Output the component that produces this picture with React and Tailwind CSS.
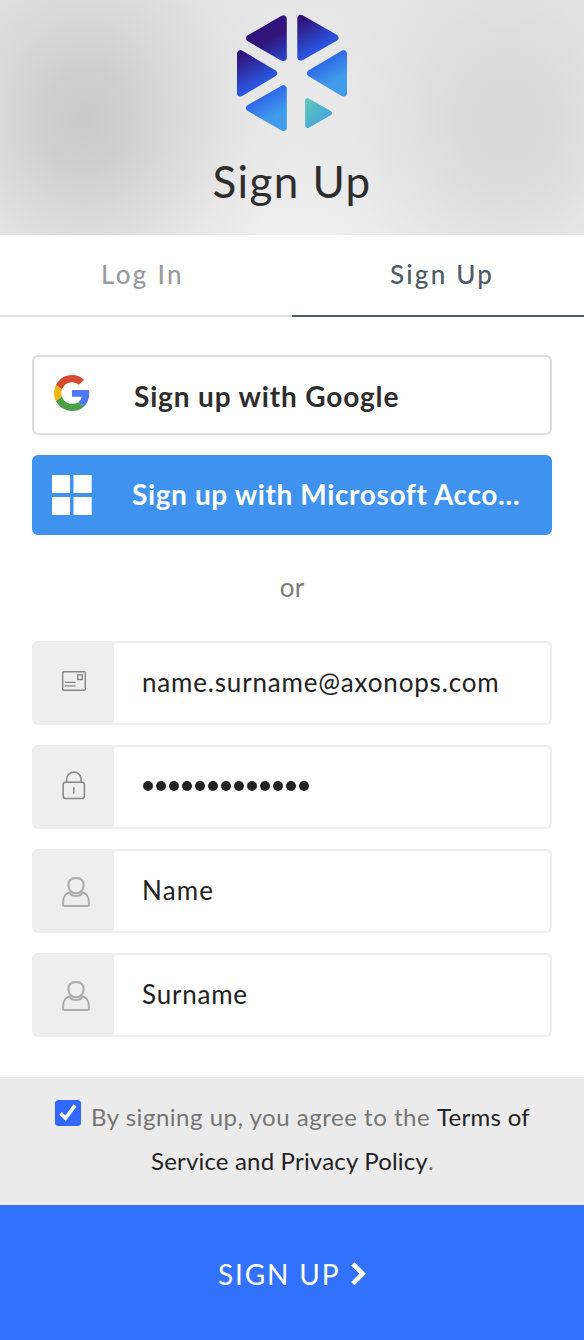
function Logo() {
  return (
    <svg width="116" height="122" viewBox="234 12 116 122" className="block">
      <defs>
        <linearGradient id="brand" gradientUnits="userSpaceOnUse" x1="240" y1="52" x2="278" y2="117">
          <stop offset="0.05" stopColor="#30147b" />
          <stop offset="0.45" stopColor="#2a50d8" />
          <stop offset="0.65" stopColor="#2f66e8" />
          <stop offset="0.96" stopColor="#409bea" />
        </linearGradient>
        <linearGradient id="teal" gradientUnits="userSpaceOnUse" x1="305" y1="100" x2="326" y2="122">
          <stop offset="0" stopColor="#63c8b9" />
          <stop offset="1" stopColor="#43a5df" />
        </linearGradient>
      </defs>
      <g fill="url(#brand)" stroke="url(#brand)" strokeWidth="7" strokeLinejoin="round">
        <path d="M249.5 38.3 283.3 18.9V57.6Z" />
        <path d="M300.8 18.4V57.1L335 37.8Z" />
        <path d="M240.5 53.7V93L273.6 73.3Z" />
        <path d="M343.5 53.7V93L310.5 73.3Z" />
        <path d="M249.5 108 283.3 88.7V127.5Z" />
      </g>
      <path d="M307.6 100.6V125.6L329.4 113.2Z" fill="url(#teal)" stroke="url(#teal)" strokeWidth="5" strokeLinejoin="round" />
    </svg>
  )
}

function GoogleIcon() {
  return (
    <svg width="36" height="36" viewBox="0 0 48 48" className="block shrink-0">
      <path fill="#d64a32" d="M24 9.5c3.54 0 6.71 1.22 9.21 3.6l6.85-6.85C35.9 2.38 30.47 0 24 0 14.62 0 6.51 5.38 2.56 13.22l7.98 6.19C12.43 13.72 17.74 9.5 24 9.5z" />
      <path fill="#4e78f6" d="M46.98 24.55c0-1.57-.15-3.09-.38-4.55H24v9.02h12.94c-.58 2.96-2.26 5.48-4.78 7.18l7.73 6c4.51-4.18 7.09-10.36 7.09-17.65z" />
      <path fill="#f3b60e" d="M10.53 28.59c-.48-1.45-.76-2.99-.76-4.59s.27-3.14.76-4.59l-7.98-6.19C.92 16.46 0 20.12 0 24c0 3.88.92 7.54 2.56 10.78l7.97-6.19z" />
      <path fill="#4a9f47" d="M24 48c6.48 0 11.93-2.13 15.89-5.81l-7.73-6c-2.15 1.45-4.92 2.3-8.16 2.3-6.26 0-11.57-4.22-13.47-9.91l-7.98 6.19C6.51 42.62 14.62 48 24 48z" />
    </svg>
  )
}

function MicrosoftIcon() {
  return (
    <svg width="40" height="40" viewBox="0 0 40 40" className="block shrink-0" fill="#fff">
      <path d="M0 0h18v18H0zM21.5 0H39.700v18H21.500zM0 22h18v18H0zM21.500 22H39.700v18H21.500z" />
    </svg>
  )
}

function MailIcon() {
  return (
    <svg width="24" height="20" viewBox="0 0 24 20" className="block" fill="none" stroke="#868686" strokeWidth="1.4">
      <rect x="0.7" y="0.7" width="22.6" height="18.6" rx="1" />
      <rect x="15.7" y="3.9" width="4.6" height="4.6" />
      <path d="M3 11.4h10.6M3 14.9h10.6" />
    </svg>
  )
}

function LockIcon() {
  return (
    <svg width="24" height="29" viewBox="0 0 24 29" className="block" fill="none" stroke="#868686" strokeWidth="1.5">
      <rect x="1.200" y="11.200" width="21.200" height="16.200" rx="2.5" />
      <path d="M4.7 11.2V8.2a7.2 7.2 0 0 1 14.4 0v3M11.8 16.300v6.400" />
    </svg>
  )
}

function UserIcon() {
  return (
    <svg width="28" height="30" viewBox="0 0 28 30" className="block" fill="none" stroke="#ababab" strokeWidth="2">
      <path d="M14 1C9 1 6.400 3.400 6.400 8.200S9.600 16.200 14 16.200S21.600 13 21.600 8.200 19 1 14 1Z" />
      <path d="M7.5 15.3C3.2 16.2 1 20.5 1 27.5Q1 29 2.5 29H25.5Q27 29 27 27.5C27 20.5 24.8 16.2 20.5 15.3C18.8 20.2 9.2 20.2 7.5 15.3Z" />
    </svg>
  )
}

function Field({ icon, children }) {
  return (
    <div className="flex h-[84px] overflow-hidden rounded-md border-2 border-[#eeeeee] bg-white">
      <div className="w-20 shrink-0 bg-[#eeeeee] pl-7">{icon}</div>
      <div className="flex flex-1 items-center pb-0.5 text-[26px] whitespace-nowrap text-[#222222]">{children}</div>
    </div>
  )
}

export default function App() {
  return (
    <main className="flex h-[1340px] w-[584px] flex-col bg-white font-['Lato',sans-serif]">
      <header className="flex h-[235px] flex-col items-center bg-[radial-gradient(ellipse_200px_240px_at_85px_118px,#cacaca_0%,rgba(204,204,204,0.9)_20%,rgba(208,208,208,0.62)_45%,rgba(216,216,216,0.25)_75%,rgba(231,231,231,0)_100%),radial-gradient(ellipse_200px_240px_at_508px_122px,#d8d8d8_0%,rgba(217,217,217,0.85)_25%,rgba(220,220,220,0.5)_55%,rgba(226,226,226,0.18)_80%,rgba(231,231,231,0)_100%),linear-gradient(#e6e6e6,#e9e9e9_60%,#eeeeee)] pt-3">
        <Logo />
        <h1 className="mt-[17px] text-[44px] leading-[60px] tracking-[1.4px] text-[#2d2d2d]">Sign Up</h1>
      </header>

      <nav className="grid h-[82px] grid-cols-2 text-[26px] leading-[78px] font-medium">
        <a className="border-b-2 border-[#dddddd] pl-[101px] tracking-[2.3px] text-[#989ba2]">Log In</a>
        <a className="border-b-2 border-[#4f5b66] pl-[98px] tracking-[2.25px] text-[#4f5b66]">Sign Up</a>
      </nav>

      <section className="flex flex-col gap-5 px-8 pt-[38px]">
        <button className="flex h-20 rounded-md border-2 border-[#dbdbe0] pt-[18px] pl-5 text-left text-[28px] font-bold text-[#2d2d2d]">
          <GoogleIcon />
          <span className="ml-11 leading-[42px] tracking-[0.84px]">Sign up with Google</span>
        </button>
        <button className="flex h-20 rounded-md bg-[#3f93ef] pt-5 pl-5 text-left text-[28px] font-bold text-white">
          <MicrosoftIcon />
          <span className="ml-10 leading-[38px] tracking-[0.62px] whitespace-nowrap">Sign up with Microsoft Acco…</span>
        </button>
      </section>

      <p className="flex h-[106px] items-center justify-center pb-0.5 text-[26px] tracking-[0.2px] text-[#7b7b7b]">or</p>

      <section className="flex flex-col gap-5 px-8">
        <Field icon={<div className="pt-7"><MailIcon /></div>}>
          <span className="pl-7 tracking-[0.82px]">name.surname@axonops.com</span>
        </Field>
        <Field icon={<div className="pt-6"><LockIcon /></div>}>
          <div className="flex gap-[3px] pl-[29px]">
            {Array.from({ length: 13 }, (_, i) => (
              <span key={i} className="size-2.5 rounded-full bg-[#222222]" />
            ))}
          </div>
        </Field>
        <Field icon={<div className="pt-[26px]"><UserIcon /></div>}>
          <span className="pl-7 tracking-[1.2px]">Name</span>
        </Field>
        <Field icon={<div className="pt-[26px]"><UserIcon /></div>}>
          <span className="pl-7 tracking-[0.78px]">Surname</span>
        </Field>
      </section>

      <section className="mt-10 h-32 bg-[#ebebeb] pt-[18px] text-[24px] leading-[44px] whitespace-nowrap text-[#757575]">
        <div className="flex pl-[55px]">
          <svg width="26" height="26" viewBox="0 0 26 26" className="mt-[5px] mr-2.5 shrink-0">
            <rect width="26" height="26" rx="3.5" fill="#3268ff" />
            <path d="M5.6 13.4 10.6 18.3 20 5.4" fill="none" stroke="#fff" strokeWidth="3.6" />
          </svg>
          <span className="w-[346px] tracking-[0.52px]">By signing up, you agree to the</span>
          <a className="tracking-[0.3px] text-[#222222]">Terms of</a>
        </div>
        <div className="pl-[151px]">
          <a className="tracking-[0.18px] text-[#222222]">Service and Privacy Policy</a>.
        </div>
      </section>

      <button className="flex h-[135px] items-center bg-[#3272ff] pl-[218px] text-[28px] text-white">
        <span className="w-[132px] pt-0.5 text-left tracking-[1.85px]">SIGN UP</span>
        <svg width="18" height="26" viewBox="0 0 18 26" className="mt-[3px]" fill="none" stroke="#fff" strokeWidth="4.6">
          <path d="M2.8 2.8 12.600 12.700 2.800 22.700" />
        </svg>
      </button>
    </main>
  )
}
